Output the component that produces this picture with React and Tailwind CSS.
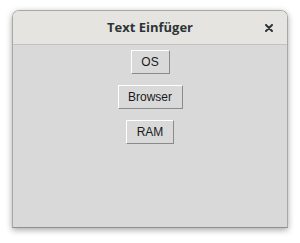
import React from "react";

const TkButton = ({ label, className }) => (
  <button
    className={`h-[24px] border border-t-white border-l-white border-b-[#8a8a8a] border-r-[#8a8a8a] bg-[#d9d9d9] text-[12px] text-[#1a1a1a] leading-none ${className}`}
    style={{ fontFamily: '"Liberation Sans", Arial, sans-serif' }}
  >
    {label}
  </button>
);

export default function App() {
  return (
    <div className="w-[300px] h-[243px] bg-white pt-[10px] pl-[12px]">
      <div className="w-[276px] h-[218px] flex flex-col rounded-t-[7px] overflow-hidden border border-[#a8a8a8] border-b-[#909090] shadow-[0_2px_6px_rgba(0,0,0,0.35)]">
        {/* Title bar */}
        <div className="h-[34px] shrink-0 flex items-center relative bg-[#e6e4e1] border-b border-[#c4c2bf]">
          <div
            className="w-full text-center text-[13px] font-bold text-[#2e3436]"
            style={{ fontFamily: '"Open Sans", "Noto Sans", sans-serif' }}
          >
            Text Einfüger
          </div>
          <svg className="absolute right-[14px] top-[13px]" width="8" height="8" viewBox="0 0 8 8">
            <path d="M1 1 L7 7 M7 1 L1 7" stroke="#2e3436" strokeWidth="2" strokeLinecap="round" />
          </svg>
        </div>
        {/* Content */}
        <div className="flex-1 bg-[#d9d9d9] flex flex-col items-center pt-[5px] gap-[11px]">
          <TkButton label="OS" className="w-[39px]" />
          <TkButton label="Browser" className="w-[65px]" />
          <TkButton label="RAM" className="w-[48px]" />
        </div>
      </div>
    </div>
  );
}
